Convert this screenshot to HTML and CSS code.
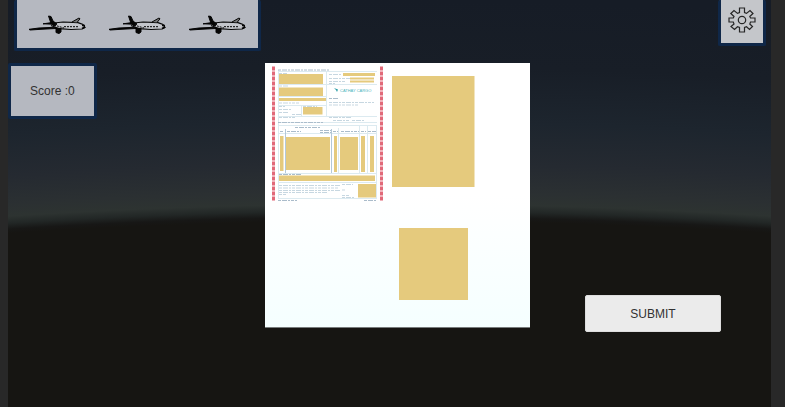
FILE: index.html
```html
<!DOCTYPE html>
<html lang="en">
<head>
<meta charset="utf-8">
<title>Cargo documents</title>
<link rel="stylesheet" href="styles.css">
</head>
<body>
<svg class="symbols" aria-hidden="true">
  <symbol id="plane" viewBox="0 0 57 19">
    <path d="M24 7.500 50 8 55 10.500 56.500 12 55 14 49 14.500 30 13.500 23 11Z" fill="#c3c5cb"/>
    <path d="M0 14.300 10 13 27 12.200 27 13.500 12 14.300 1 15Z" stroke="#050505"/>
    <path d="M19.500 1 22 1.500 24 6 28 9 25 11 22 8.500Z" fill="#050505" stroke="#050505"/>
    <path d="M14 8.800 23 7.600 24 9.200Z" fill="#050505" stroke="#050505"/>
    <path d="M25 8 34 7 49 7.600 54 9.500 56 12.500 53 14 42 14.500 30 13.700 22 10.500" fill="none" stroke="#050505" stroke-width="1.200"/>
    <path d="M43 7 50 3 51 3.800 48 7.500" fill="#777" stroke="#050505"/>
    <path d="M25 10 35 13M35 11.700H50" fill="none" stroke="#050505" stroke-dasharray="2 1"/>
    <path d="M53 10.500 56 10.500M53 13.500 56 12" stroke="#050505" stroke-width="1.500"/>
    <path d="M27 13 32 13.500 32 17 30 18.500 27 17.500Z" fill="#050505" stroke="#050505"/>
  </symbol>
</svg>
<main class="stage">
  <section class="status">
    <div class="panel lives" role="img" aria-label="3 lives">
      <svg class="plane"><use href="#plane"/></svg>
      <svg class="plane"><use href="#plane"/></svg>
      <svg class="plane"><use href="#plane"/></svg>
    </div>
    <div class="panel score">Score :0</div>
  </section>

  <section class="document">
    <svg class="sheet" viewBox="0 0 265 264" role="img" aria-label="Cathay Cargo form">
      <g class="stripe">
        <path d="M8.500 3.500V138" /><path d="M116.500 3.500V138" />
      </g>
      <g class="rule">
        <path d="M13 8.500H112M13 21.500H112M13 33.500H61M13 42.500H61M13 53.500H112M13 59.500H112M13 62.500H112M13 70.500H112M13 110.500H112M13 119.500H112M13 135.500H112M13.500 7V136M111.500 62V136M61.500 8V54M36.500 42V54M94.500 62V110M102.500 62V110M73.500 65V110"/>
      </g>
      <path class="column" d="M20.500 66V110M66.500 66V110"/>
      <g class="writing">
        <path class="strong" d="M13 7H64M13 59.500H58M64 35.500H73"/>
        <path d="M14 10.500H22M64 11.500H76M64 15.500H85M64 18.500H81M64 20.500H70M14 23H24M64 39.500H109M64 42H94M14 40H34M14 43.500H20M38 43.500H52M14 46.500H27M14 49.500H24M27 51.500H36M14 54.500H30M64 54.500H86M68 57.500H84M87 57.500H100"/>
        <path class="strong" d="M30 64.500H55M15 68.500H19M22 68.500H36M55 67.500H66M55 69.500H66M68 68.500H73M76 68.500H94M96 68.500H101M103 68.500H111M14 111.500H36"/>
        <path d="M14 122.500H75M14 125H73M14 127.500H75M14 129.500H62M14 131.500H21M77 121.500H88M77 127H80M77 132.500H84M77 134.500H90"/>
        <path class="strong" d="M13 137.500H32M99 137.500H112"/>
      </g>
      <g class="field">
        <path d="M14 11H58V21H14ZM14 24.500H58V33H14ZM14 35H61V38H14ZM38 44H57.500V51.500H38ZM78 10H110V13H78ZM85 14.500H109V16.500H85ZM85 17.500H109V19.500H85Z"/>
        <path d="M15 73H18.500V108H15ZM21 74H65V107H21ZM69 73H72V109H69ZM75 74H93V107H75ZM96 73H100V109H96ZM105 73H109V109H105ZM14 112.500H110V118H14ZM93 121H111V134.500H93Z"/>
        <path d="M127 13H209.500V124H127ZM134 165H203V237H134Z"/>
      </g>
      <path class="brandmark" d="M69 25 73 26.500 72 29 71 27Z"/>
      <text class="brand" x="75" y="29">CATHAY CARGO</text>
    </svg>
  </section>

  <section class="actions">
    <button class="settings" type="button" aria-label="Settings">
      <svg class="gear" viewBox="0 0 28 26">
        <path d="M11.500 5.500V1H16.500V5.500L18.500 6.400 22 3.500 25 6.500 21.800 9.500 22.500 11H27V15H22.500L21.800 17 24.500 19.500 21.500 22.500 18.500 19.800 16.500 20.500V25H11.500V20.500L9.500 19.800 6.500 22.500 3 19.500 6 17 5.300 15H1V11H5.300L6 9.500 2.800 6.500 6 3.500 9.500 6.400Z"/>
        <circle cx="14" cy="13" r="3.700"/>
      </svg>
    </button>
    <button class="submit" type="button">SUBMIT</button>
  </section>
</main>
</body>
</html>
```

FILE: styles.css
```css
* {
  box-sizing: border-box;
}

body {
  margin: 0;
  padding: 0 14px 0 8px;
  background: #282828;
  font-family: "Liberation Sans", Arial, sans-serif;
  font-size: 12px;
  color: #323232;
}

.symbols {
  display: none;
}

/* Sky above a slightly curved horizon */
.stage {
  display: grid;
  grid-template-columns: 257fr minmax(0, 265fr) 241fr;
  min-height: 100vh;
  background: radial-gradient(circle at 50% 6212px,
    #161512 5991px, #171716 5995px, #222726 6001px, #2d3331 6008px,
    #2b3032 6020px, #252a31 6048px, #1d252e 6090px, #181e27 6145px, #161c26 6212px);
}

.status {
  display: flex;
  flex-direction: column;
  align-items: flex-start;
  gap: 12px;
}

.panel {
  background: #b5b8c0;
  border: 3px solid #0f2748;
  border-radius: 2px;
}

.lives {
  display: flex;
  align-items: center;
  justify-content: space-between;
  width: 247px;
  height: 51px;
  margin-left: 6px;
  padding: 0 12px;
  border-top: 0;
}

.plane {
  width: 57px;
  height: 19px;
}

.score {
  padding: 18px 19px;
  line-height: 14px;
}

.document {
  padding-top: 63px;
}

.sheet {
  display: block;
  width: 100%;
  background: linear-gradient(#ffffff 50%, #f5ffff);
  border-bottom: 1px solid #777b7b;
}

.stripe {
  fill: none;
  stroke: #e16878;
  stroke-width: 3;
  stroke-dasharray: 4 1;
}

.rule {
  fill: none;
  stroke: #dceaf0;
}

.column {
  stroke: #b4c8d8;
}

.writing {
  fill: none;
  stroke: #c7d7e1;
  stroke-dasharray: 3 1 5 1 2 1;
}

.strong {
  stroke: #aabccb;
}

.field {
  fill: #e5ca7d;
}

.brand {
  fill: #4bb4bc;
  font-size: 4px;
}

.brandmark {
  fill: #279ca5;
}

.actions {
  display: flex;
  flex-direction: column;
  align-items: flex-end;
  justify-content: space-between;
  padding-bottom: 75px;
}

.settings {
  display: flex;
  align-items: center;
  justify-content: center;
  width: 48px;
  height: 46px;
  margin-right: 5px;
  padding: 0 0 3px;
  background: #c4c6ca;
  border: 3px solid #0f2748;
  border-top: 0;
  border-radius: 2px;
}

.gear {
  width: 28px;
  height: 26px;
  fill: none;
  stroke: #262626;
  stroke-width: 1.2;
}

.submit {
  width: 136px;
  height: 37px;
  margin-right: 50px;
  padding: 0;
  background: #ebebeb;
  border: 1px solid #dedede;
  border-radius: 2px;
  font: inherit;
  color: inherit;
}
```
